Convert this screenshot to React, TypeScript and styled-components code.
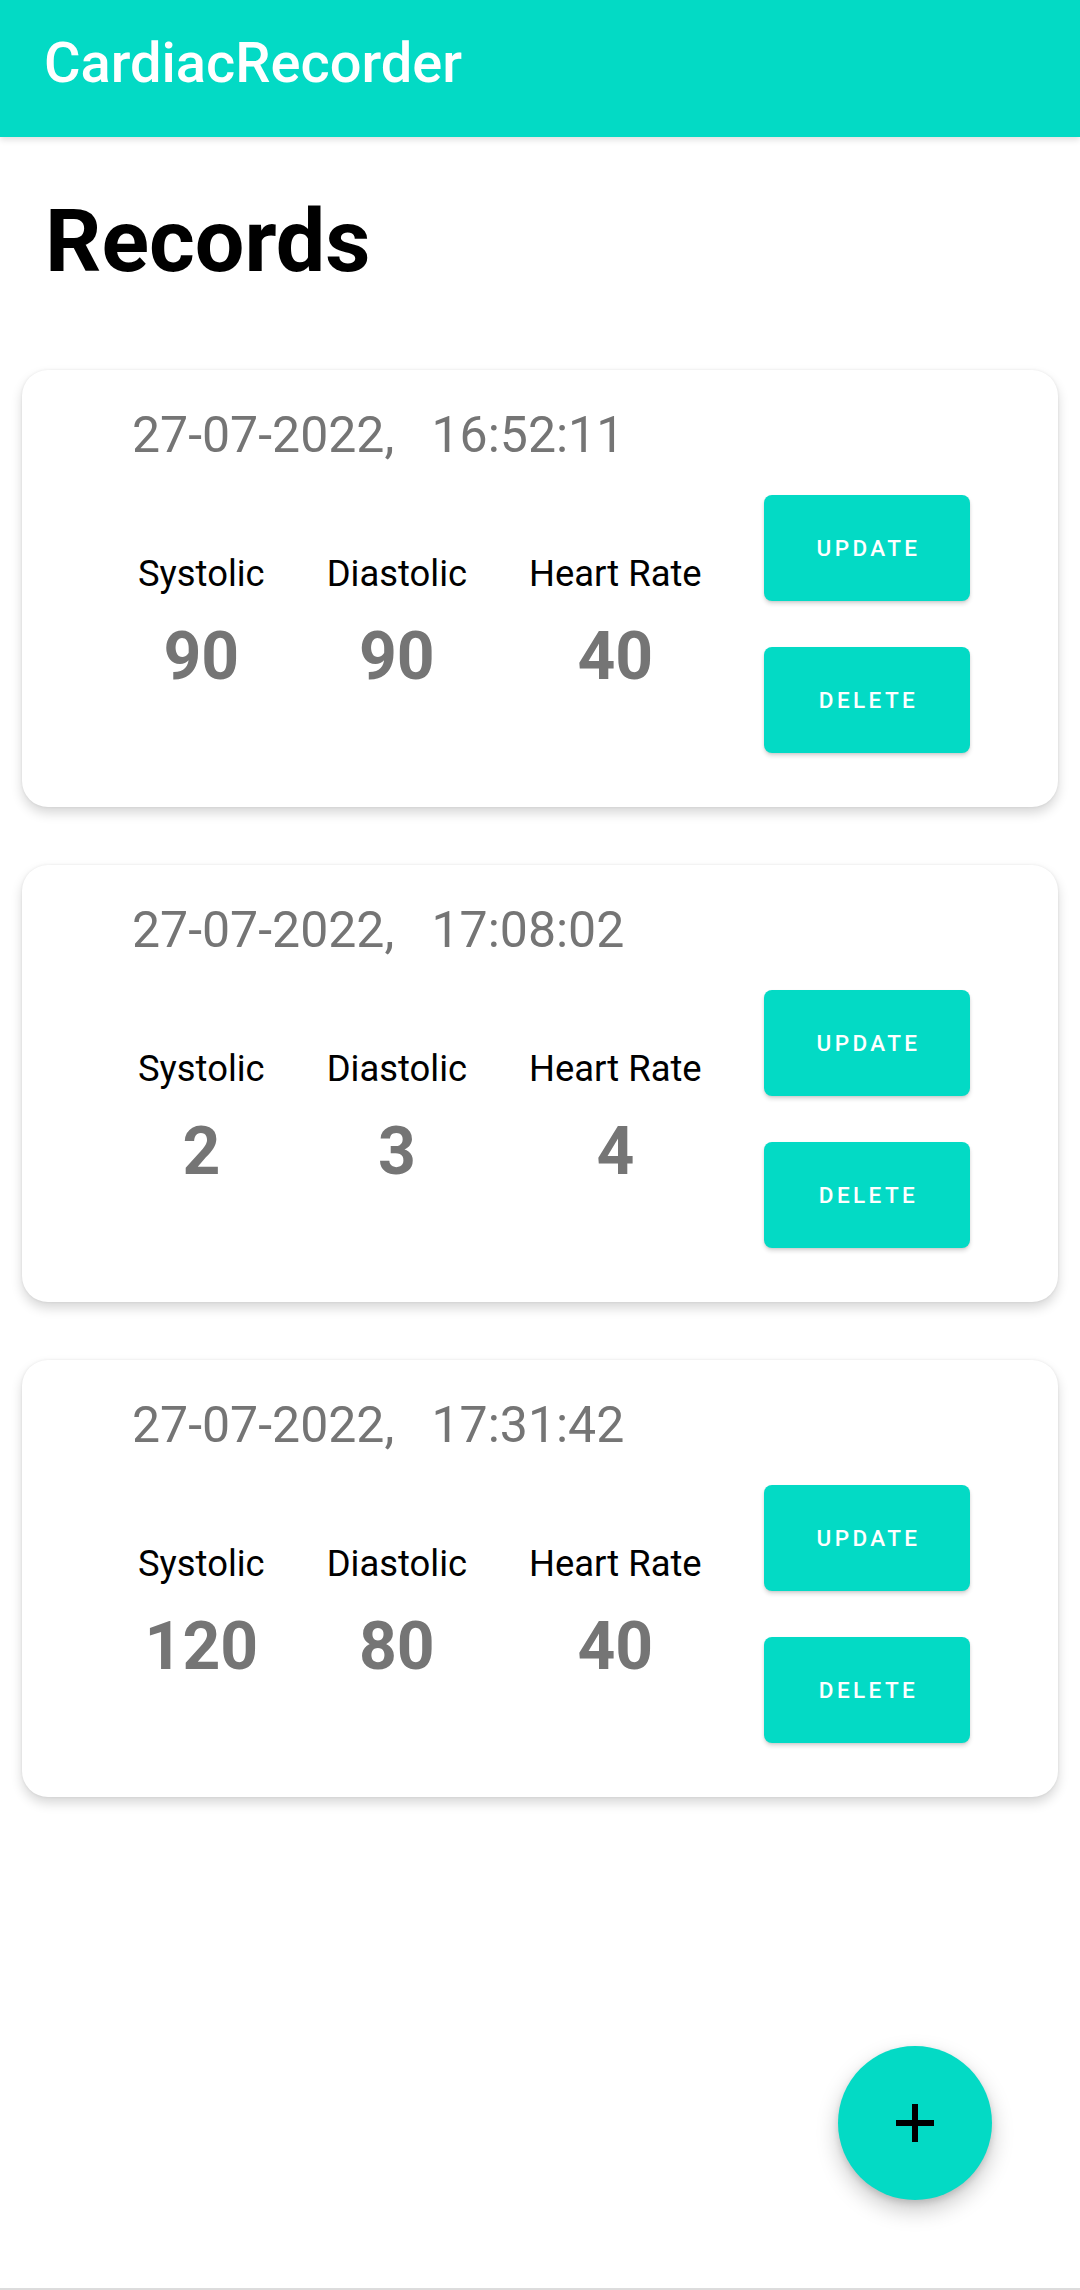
import React from "react";
import styled, { createGlobalStyle } from "styled-components";

const Global = createGlobalStyle`
  html, body { margin: 0; padding: 0; background: #ffffff; }
  body { font-family: Roboto, "Noto Sans", Arial, sans-serif; }
  * { box-sizing: border-box; }
`;

const Screen = styled.div`
  position: relative;
  width: 1080px;
  min-height: 2290px;
  display: flex;
  flex-direction: column;
  background: #ffffff;
  border-bottom: 2px solid #dcdcdc;
`;

const TopBar = styled.header`
  height: 137px;
  padding: 30px 0 0 44px;
  background: #03dac5;
  box-shadow: 0 3px 6px rgba(0, 0, 0, 0.12);
  position: relative;
  z-index: 1;
`;

const AppTitle = styled.h1`
  margin: 0;
  font-size: 56px;
  line-height: 66px;
  font-weight: 500;
  color: #ffffff;
`;

const Heading = styled.h2`
  margin: 52px 0 77px 45px;
  font-size: 88px;
  line-height: 104px;
  font-weight: 700;
  color: #000000;
`;

const List = styled.div`
  display: flex;
  flex-direction: column;
  gap: 58px;
  padding: 0 22px;
`;

const Card = styled.section`
  background: #ffffff;
  border-radius: 26px;
  padding: 36px 88px 54px 110px;
  box-shadow: 0 6px 12px rgba(0, 0, 0, 0.16), 0 0 3px rgba(0, 0, 0, 0.08);
  display: flex;
  flex-direction: column;
`;

const DateLine = styled.div`
  font-size: 50px;
  line-height: 59px;
  color: #757575;
  white-space: pre;
`;

const Body = styled.div`
  margin-top: 30px;
  display: flex;
  align-items: center;
`;

const Stats = styled.div`
  display: flex;
  gap: 62px;
  margin-left: 6px;
`;

const Stat = styled.div`
  display: flex;
  flex-direction: column;
  align-items: center;
  gap: 22px;
`;

const StatLabel = styled.div`
  font-size: 36.4px;
  line-height: 44px;
  color: #000000;
`;

const StatValue = styled.div`
  font-size: 66px;
  line-height: 78px;
  font-weight: 700;
  color: #757575;
`;

const Actions = styled.div`
  margin-left: auto;
  display: flex;
  flex-direction: column;
  gap: 46px;
`;

const ActionButton = styled.button`
  width: 206px;
  height: 106px;
  border: none;
  border-radius: 8px;
  background: #03dac5;
  color: #ffffff;
  font-family: Roboto, sans-serif;
  font-size: 22.5px;
  font-weight: 500;
  letter-spacing: 3.4px;
  padding: 0 0 0 3px;
  box-shadow: 0 3px 4px rgba(0, 0, 0, 0.14), 0 1px 2px rgba(0, 0, 0, 0.08);
`;

const Fab = styled.button`
  position: absolute;
  right: 88px;
  bottom: 88px;
  width: 154px;
  height: 154px;
  border-radius: 50%;
  border: none;
  background: #03dac5;
  display: flex;
  align-items: center;
  justify-content: center;
  padding: 0;
  box-shadow: 0 10px 22px rgba(0, 0, 0, 0.22), 0 3px 6px rgba(0, 0, 0, 0.12);
`;

type Rec = { date: string; time: string; sys: string; dia: string; hr: string };

const records: Rec[] = [
  { date: "27-07-2022,", time: "16:52:11", sys: "90", dia: "90", hr: "40" },
  { date: "27-07-2022,", time: "17:08:02", sys: "2", dia: "3", hr: "4" },
  { date: "27-07-2022,", time: "17:31:42", sys: "120", dia: "80", hr: "40" },
];

export default function App() {
  return (
    <Screen>
      <Global />
      <TopBar>
        <AppTitle>CardiacRecorder</AppTitle>
      </TopBar>
      <Heading>Records</Heading>
      <List>
        {records.map((r) => (
          <Card key={r.time}>
            <DateLine>{`${r.date}   ${r.time}`}</DateLine>
            <Body>
              <Stats>
                <Stat>
                  <StatLabel>Systolic</StatLabel>
                  <StatValue>{r.sys}</StatValue>
                </Stat>
                <Stat>
                  <StatLabel>Diastolic</StatLabel>
                  <StatValue>{r.dia}</StatValue>
                </Stat>
                <Stat>
                  <StatLabel>Heart Rate</StatLabel>
                  <StatValue>{r.hr}</StatValue>
                </Stat>
              </Stats>
              <Actions>
                <ActionButton>UPDATE</ActionButton>
                <ActionButton>DELETE</ActionButton>
              </Actions>
            </Body>
          </Card>
        ))}
      </List>
      <Fab aria-label="Add record">
        <svg width="40" height="40" viewBox="0 0 40 40">
          <rect x="1" y="17" width="38" height="6" fill="#000" />
          <rect x="17" y="1" width="6" height="38" fill="#000" />
        </svg>
      </Fab>
    </Screen>
  );
}
